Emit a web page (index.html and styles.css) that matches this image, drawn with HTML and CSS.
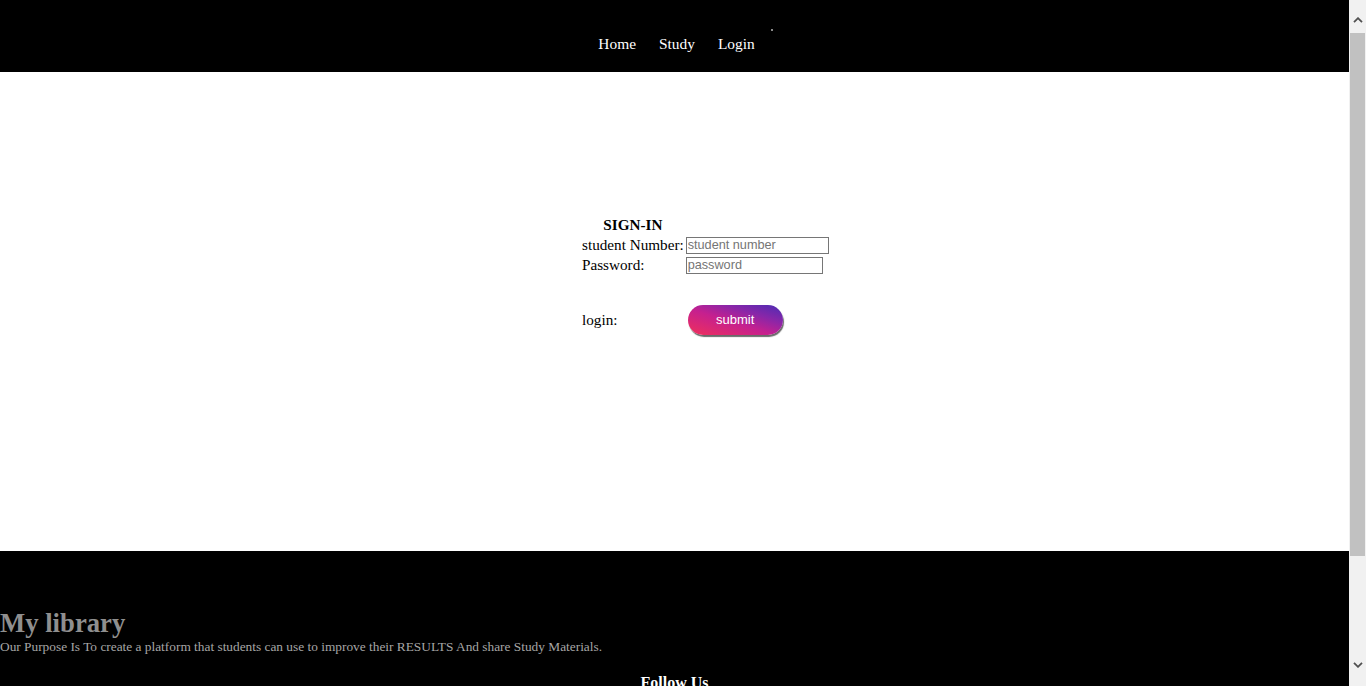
FILE: index.html
```html
<!DOCTYPE html>
<html lang="en">
<head>
<meta charset="utf-8">
<title>My library - Login</title>
<link rel="stylesheet" href="styles.css">
</head>
<body>
<div class="page">
  <header class="topbar">
    <nav class="nav">
      <a class="nav-link" href="#">Home</a>
      <a class="nav-link" href="#">Study</a>
      <a class="nav-link nav-last" href="#">Login<span class="nav-dot"></span></a>
    </nav>
  </header>
  <main class="main">
    <form class="signin">
      <table class="signin-table">
        <tr><th class="signin-title">SIGN-IN</th><td></td></tr>
        <tr>
          <td class="label">student Number:</td>
          <td><input class="field field-text" type="text" placeholder="student number"></td>
        </tr>
        <tr>
          <td class="label">Password:</td>
          <td><input class="field field-pass" type="password" placeholder="password"></td>
        </tr>
        <tr class="spacer"><td></td><td></td></tr>
        <tr class="login-row">
          <td class="label">login:</td>
          <td><button class="submit" type="button">submit</button></td>
        </tr>
      </table>
    </form>
  </main>
  <footer class="footer">
    <h1 class="brand">My library</h1>
    <p class="purpose">Our Purpose Is To create a platform that students can use to improve their RESULTS And share Study Materials.</p>
    <h3 class="follow">Follow Us</h3>
  </footer>
</div>
<div class="scrollbar" aria-hidden="true">
  <div class="sb-btn sb-up">
    <svg width="10" height="6" viewBox="0 0 10 6"><path d="M1 5.2 L5 1.2 L9 5.2" fill="none" stroke="#505050" stroke-width="1.8"/></svg>
  </div>
  <div class="sb-thumb"></div>
  <div class="sb-track"></div>
  <div class="sb-btn sb-down">
    <svg width="10" height="6" viewBox="0 0 10 6"><path d="M1 0.8 L5 4.8 L9 0.8" fill="none" stroke="#505050" stroke-width="1.8"/></svg>
  </div>
</div>
</body>
</html>
```
FILE: styles.css
```css
html, body {
  margin: 0;
  padding: 0;
}
body {
  display: flex;
  align-items: flex-start;
  font-family: "Liberation Serif", "Times New Roman", serif;
  font-size: 16px;
  color: #000;
  background: #fff;
}
.page {
  flex: 1;
  min-width: 0;
}
.scrollbar {
  position: sticky;
  top: 0;
  flex: none;
  width: 17px;
  height: 686px;
  background: #f1f1f1;
  display: flex;
  flex-direction: column;
}
.sb-btn {
  height: 33px;
  display: flex;
  justify-content: center;
}
.sb-up {
  align-items: flex-start;
  padding-top: 17px;
  box-sizing: border-box;
}
.sb-down {
  align-items: flex-start;
  padding-top: 9px;
  box-sizing: border-box;
}
.sb-thumb {
  height: 523px;
  margin: 0 1px;
  background: #c1c1c1;
}
.sb-track {
  flex: 1;
}
.topbar {
  background: #000;
  height: 72px;
  box-sizing: border-box;
  padding-top: 35px;
}
.nav {
  display: flex;
  justify-content: center;
  gap: 23px;
  padding-left: 4px;
  line-height: 18px;
}
.nav-link {
  color: #fff;
  text-decoration: none;
  font-size: 15.4px;
}
.nav-last {
  position: relative;
}
.nav-dot {
  position: absolute;
  right: -18px;
  top: -6px;
  width: 2px;
  height: 2px;
  background: #8a8a8a;
}
.main {
  height: 479px;
  box-sizing: border-box;
  padding-top: 142px;
}
.signin-table {
  margin-left: 580px;
  border-spacing: 2px;
  font-size: 15.2px;
}
.signin-table td, .signin-table th {
  padding: 0;
  vertical-align: middle;
  height: 18px;
  line-height: 18px;
}
.signin-title {
  font-weight: bold;
  text-align: center;
}
.label {
  white-space: nowrap;
}
.field {
  display: block;
  box-sizing: border-box;
  height: 17px;
  padding: 0 1px;
  border: 1px solid #767676;
  font-family: "Liberation Sans", Arial, sans-serif;
  font-size: 12.7px;
  color: #000;
  outline: none;
}
.field::placeholder {
  color: #757575;
}
.field-text {
  width: 143px;
}
.field-pass {
  width: 137px;
}
.signin-table .spacer td {
  height: 24px;
}
.signin-table .login-row td {
  height: 35px;
}
.submit {
  display: block;
  margin-left: 2px;
  width: 95px;
  height: 30px;
  border: none;
  border-radius: 15px;
  background: linear-gradient(to top right, #f0305a 0%, #c5208f 45%, #8a26a8 70%, #4a2cb4 100%);
  box-shadow: 1px 2px 1px #6a6a6a;
  color: #fff;
  font-family: "Liberation Sans", Arial, sans-serif;
  font-size: 13px;
  cursor: pointer;
}
.footer {
  background: #000;
  padding: 57px 0 160px;
}
.brand {
  margin: 0;
  font-size: 26.7px;
  line-height: 31px;
  color: #8f8f8f;
}
.purpose {
  margin: 0;
  font-size: 13.35px;
  line-height: 16px;
  color: #a6a6a6;
}
.follow {
  margin: 18px 0 0;
  text-align: center;
  color: #fff;
  font-size: 16px;
  line-height: 19px;
}
```
